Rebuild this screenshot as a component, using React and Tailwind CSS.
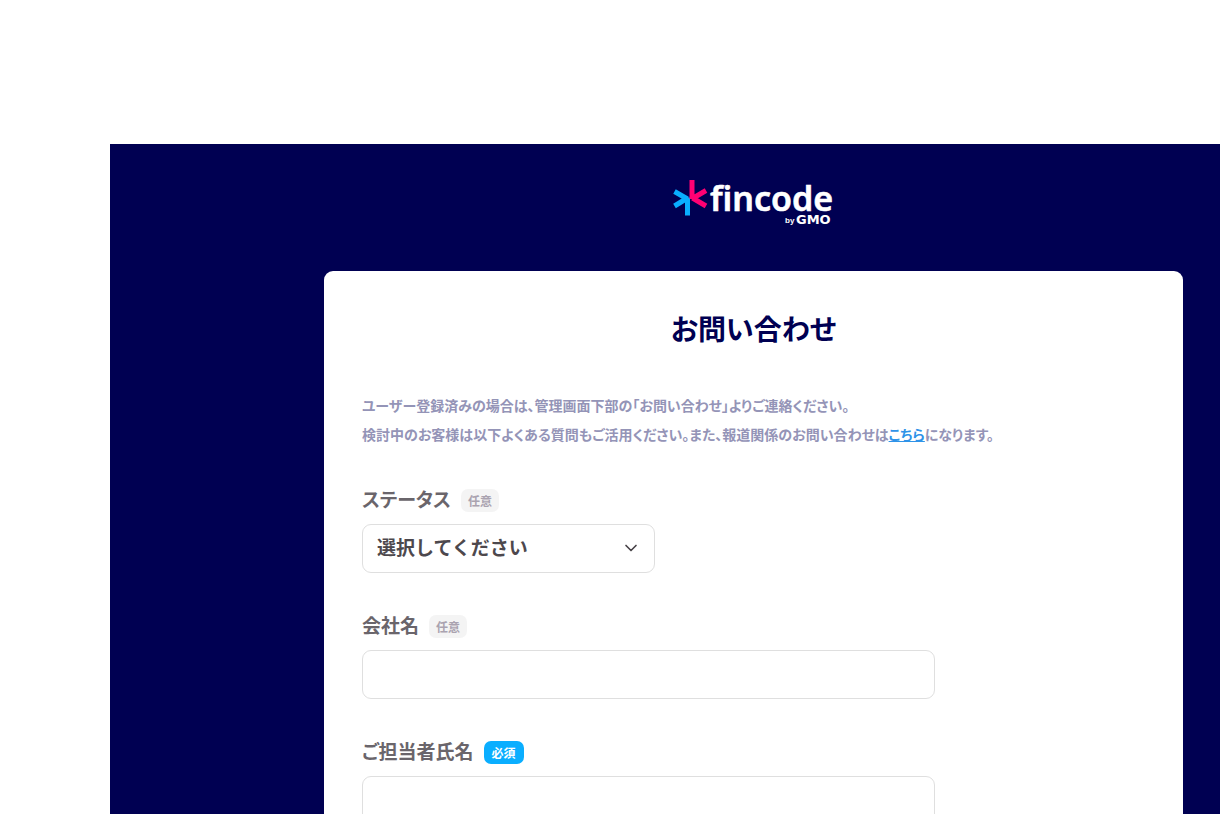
import { ChevronDown } from "lucide-react";

const fields = [
    { id: "company", label: "会社名", required: false },
    { id: "name", label: "ご担当者氏名", required: true },
];

function Logo() {
    return (
        <svg className="w-[162px] h-[46px] overflow-visible" viewBox="0 0 162 46" role="img" aria-label="fincode byGMO">
            <g fill="none" strokeWidth="5">
                <path d="M14.5 18.5V36.5M14.5 20L1.5 12.5M14.5 19L1.5 27" stroke="#09aeff" />
                <path d="M19 1V20M19.5 19.5L33 11.5M19.5 19L33 27" stroke="#ff0073" />
            </g>
            <text x="37" y="32" fill="#fff" stroke="#fff" strokeWidth="0.6" fontSize="34" fontWeight="600" fontFamily="Noto Sans, sans-serif">fincode</text>
            <text x="112" y="44" fill="#fff" fontSize="8" fontWeight="700" fontFamily="Liberation Sans, sans-serif">by</text>
            <text x="123" y="45" fill="#fff" fontSize="13" fontWeight="700" fontFamily="DejaVu Sans, sans-serif">GMO</text>
        </svg>
    );
}

function FieldLabel({ id, label, required }) {
    return (
        <div className="flex items-center gap-2.5 h-7 mb-[11px]">
            <label htmlFor={id} className="text-[19px] leading-7 font-bold text-[#6a656b]">{label}</label>
            <span
                className={`mt-0.5 rounded-[7px] text-xs leading-[23px] font-bold
                    ${required ? "px-2 bg-[#0aaeff] text-white" : "px-[7px] bg-[#f4f4f4] text-[#aaa3b0]"}`}
            >
                {required ? "必須" : "任意"}
            </span>
        </div>
    );
}

export default function App() {
    return (
        <div
            className="h-screen overflow-hidden flex flex-col bg-white pt-36 pl-[110px]
                font-['Noto_Sans_CJK_JP',sans-serif] [font-feature-settings:'palt']"
        >
            <main className="grow bg-[#000052] pt-[35px] pl-[214px] pr-[37px]">
                <header className="flex justify-center mb-[46px]">
                    <Logo />
                </header>

                <section className="bg-white rounded-[9px] px-[38px] pt-9 pb-16">
                    <h1 className="text-center text-[28px] leading-[42px] font-bold text-[#000052]">お問い合わせ</h1>

                    <p className="mt-[42px] mb-9 text-sm leading-[29px] font-bold text-[#9494b7]">
                        ユーザー登録済みの場合は、管理画面下部の「お問い合わせ」よりご連絡ください。
                        <br />
                        検討中のお客様は以下よくある質問もご活用ください。また、報道関係のお問い合わせは
                        <a href="#press" className="text-[#2f93e8] underline">こちら</a>
                        になります。
                    </p>

                    <form className="flex flex-col gap-[38px]">
                        <div>
                            <FieldLabel id="status" label="ステータス" />
                            <div className="relative w-[293px]">
                                <select
                                    id="status"
                                    className="block w-full h-[49px] px-3.5 pb-0.5 appearance-none border border-[#dfdfdf] rounded-[9px] bg-white text-[19px] font-bold text-[#4d484d] [font-feature-settings:normal]"
                                >
                                    <option>選択してください</option>
                                </select>
                                <ChevronDown className="absolute right-3.5 top-3.5 size-5 text-[#474247] pointer-events-none" />
                            </div>
                        </div>

                        {fields.map((field) => (
                            <div key={field.id}>
                                <FieldLabel {...field} />
                                <input
                                    id={field.id}
                                    type="text"
                                    className="block w-full max-w-[573px] h-[49px] px-3.5 border border-[#dfdfdf] rounded-[9px] text-[19px] text-[#4d484d]"
                                />
                            </div>
                        ))}
                    </form>
                </section>
            </main>
        </div>
    );
}
